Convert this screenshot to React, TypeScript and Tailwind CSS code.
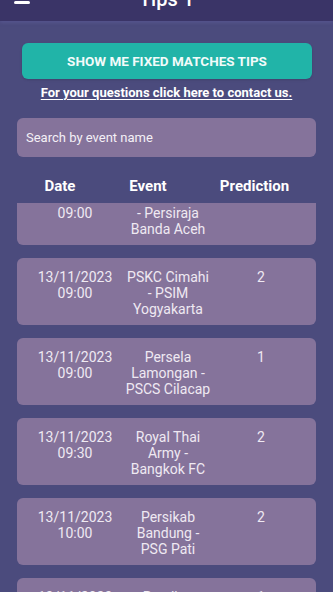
import { FC } from 'react';

type Tip = {
  date: string;
  time: string;
  event: string;
  prediction: string;
};

const tips: Tip[] = [
  { date: '13/11/2023', time: '09:00', event: 'PSMS Medan - Persiraja Banda Aceh', prediction: '1' },
  { date: '13/11/2023', time: '09:00', event: 'PSKC Cimahi - PSIM Yogyakarta', prediction: '2' },
  { date: '13/11/2023', time: '09:00', event: 'Persela Lamongan - PSCS Cilacap', prediction: '1' },
  { date: '13/11/2023', time: '09:30', event: 'Royal Thai Army - Bangkok FC', prediction: '2' },
  { date: '13/11/2023', time: '10:00', event: 'Persikab Bandung - PSG Pati', prediction: '2' },
  { date: '13/11/2023', time: '10:30', event: 'Persijap Jepara - Persekat Tegal', prediction: '1' },
];

const TipCard: FC<{ tip: Tip }> = ({ tip }) => (
  <div className="grid h-[67px] grid-cols-[100px_86px_100px] rounded-md bg-[#85739b] pl-2 pt-[11px] text-center text-[14px] leading-4 text-[#efe9f2]">
    <div>
      {tip.date}
      <br />
      {tip.time}
    </div>
    <div>{tip.event}</div>
    <div>{tip.prediction}</div>
  </div>
);

export default function App() {
  return (
    <div
      className="relative h-[592px] w-[333px] overflow-hidden bg-[#4b4b7d] text-white"
      style={{ fontFamily: 'Roboto, "Noto Sans", sans-serif' }}
    >
      {/* app bar, scrolled partly out of view */}
      <header className="relative z-10 mt-[-42px] flex h-[63px] items-end bg-[#3a3467] px-[14px] pb-[17px] shadow-[0_2px_3px_rgba(90,88,150,0.6)]">
        <div className="flex w-4 flex-col gap-[3px]">
          <span className="h-[3px] w-4 rounded-sm bg-white" />
          <span className="h-[3px] w-4 rounded-sm bg-white" />
          <span className="h-[3px] w-4 rounded-sm bg-white" />
        </div>
        <h1 className="mb-[-7px] flex-1 pr-4 text-center text-[20px] font-medium leading-6">Tips 1</h1>
      </header>

      <div className="px-[17px]">
        <button className="mx-[5px] mt-[22px] flex h-9 w-[290px] items-center justify-center rounded-md bg-[#21b4a8] text-[13.5px] font-bold text-[#f2fbfa] shadow-sm">
          SHOW ME FIXED MATCHES TIPS
        </button>
        <p className="mt-[6px] text-center text-[13px] font-bold leading-[15px] underline underline-offset-2">
          For your questions click here to contact us.
        </p>

        <div className="mt-[18px] flex h-[39px] items-center rounded-md bg-[#85739b] px-[9px] text-[13px] text-[#f4f0f6]">
          Search by event name
        </div>

        <div className="mt-[19px] grid grid-cols-[86px_90px_123px] text-center text-[15px] font-bold leading-5">
          <div>Date</div>
          <div>Event</div>
          <div>Prediction</div>
        </div>
      </div>

      {/* scrolled list */}
      <div className="mt-[7px] h-[389px] overflow-hidden px-[17px]">
        <div className="mt-[-25px] flex flex-col gap-[13px]">
          {tips.map((tip, i) => (
            <TipCard key={i} tip={tip} />
          ))}
        </div>
      </div>
    </div>
  );
}
